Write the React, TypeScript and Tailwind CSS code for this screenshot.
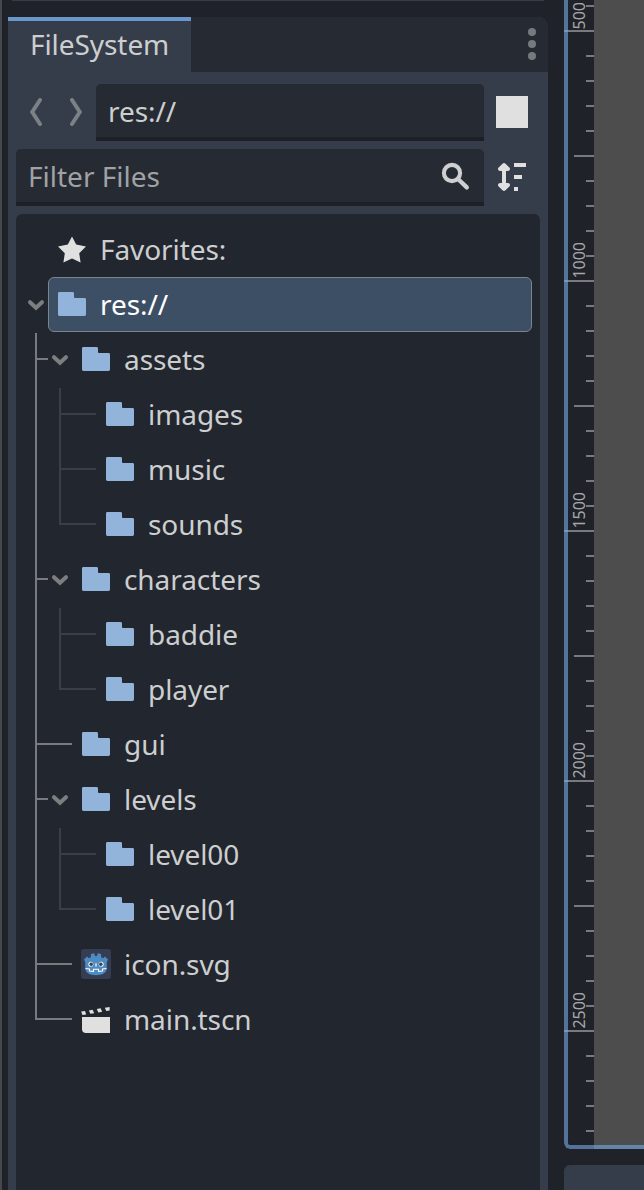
import React from "react";

type Kind = "star" | "folder" | "godot" | "scene";

interface Item {
  label: string;
  kind: Kind;
  depth: number;
  open?: boolean;
  selected?: boolean;
  first?: boolean;
  last?: boolean;
}

const items: Item[] = [
  { label: "Favorites:", kind: "star", depth: 0 },
  { label: "res://", kind: "folder", depth: 0, open: true, selected: true },
  { label: "assets", kind: "folder", depth: 1, open: true, first: true },
  { label: "images", kind: "folder", depth: 2, first: true },
  { label: "music", kind: "folder", depth: 2 },
  { label: "sounds", kind: "folder", depth: 2, last: true },
  { label: "characters", kind: "folder", depth: 1, open: true },
  { label: "baddie", kind: "folder", depth: 2, first: true },
  { label: "player", kind: "folder", depth: 2, last: true },
  { label: "gui", kind: "folder", depth: 1 },
  { label: "levels", kind: "folder", depth: 1, open: true },
  { label: "level00", kind: "folder", depth: 2, first: true },
  { label: "level01", kind: "folder", depth: 2, last: true },
  { label: "icon.svg", kind: "godot", depth: 1 },
  { label: "main.tscn", kind: "scene", depth: 1, last: true },
];

function ItemIcon({ kind }: { kind: Kind }) {
  return (
    <svg viewBox="0 0 32 32" className="h-8 w-8 shrink-0">
      {kind === "folder" && (
        <path
          fill="#92b4da"
          d="M3.4 4H16.6Q18 4 18 5.4V9Q18 10 19 10H28.6Q30 10 30 11.4V26.6Q30 28 28.6 28H3.4Q2 28 2 26.6V5.4Q2 4 3.4 4Z"
        />
      )}
      {kind === "star" && (
        <path
          fill="#e0e0e0"
          d="M16 3.4L20.2 11.6L30 13.4L23.2 20.2L24.6 29.4L16 25.4L7.4 29.4L8.8 20.2L2 13.4L11.8 11.6Z"
        />
      )}
      {kind === "godot" && (
        <>
          <rect x="1" y="1" width="30" height="30" rx="3" fill="#363d52" />
          <path
            fill="#4d8bc4"
            d="M11 6L14.3 5.2L15 8H17L17.7 5.2L21 6L21.2 9.2L23 10.2L25 8.6L28 11.4L26.8 14V20.5C26.8 24.8 22 27.2 16 27.2S5.2 24.8 5.2 20.5V14L4 11.4L7 8.6L9 10.2L10.8 9.2Z"
          />
          <path
            fill="none"
            stroke="#fff"
            strokeWidth="1.1"
            d="M5.5 20.5L9.5 21V23L13.5 23.3V21.3H18.5V23.3L22.5 23V21L26.5 20.5"
          />
          <circle cx="10.8" cy="16.2" r="2.5" fill="#e8ecf0" />
          <circle cx="21.2" cy="16.2" r="2.5" fill="#e8ecf0" />
          <circle cx="11.2" cy="16.2" r="1.7" fill="#414042" />
          <circle cx="20.8" cy="16.2" r="1.7" fill="#414042" />
          <path stroke="#fff" strokeWidth="1.2" d="M16 15.3V18.5" />
        </>
      )}
      {kind === "scene" && (
        <g fill="#e0e0e0">
          <path d="M2 14H30V30H6Q2 30 2 26Z" />
          <path d="M1.2 8.5L5 7.9L6.2 11.4L2.4 12Z" />
          <path d="M8.8 7.4L12.6 6.7L14.2 10.2L10.4 10.8Z" />
          <path d="M16.8 6L20.6 5.3L22.2 8.8L18.4 9.4Z" />
          <path d="M24.8 4.7L29.6 3.9V7.4L26.3 8Z" />
        </g>
      )}
    </svg>
  );
}

function Expander({ open }: { open?: boolean }) {
  return (
    <svg viewBox="0 0 24 55" className="h-[55px] w-6 shrink-0">
      {open && (
        <path
          d="M6 25.2L12 30.8L18 25.2"
          fill="none"
          stroke="#7d7e80"
          strokeWidth="4"
          strokeLinecap="round"
          strokeLinejoin="miter"
        />
      )}
    </svg>
  );
}

function Guide({ item, level }: { item: Item; level: number }) {
  const own = item.depth === level;
  const color = level === 1 ? "bg-[#797a7d]" : "bg-[#3b3e46]";
  const height = own && item.last ? "h-7" : own && item.first ? "mt-px h-[54px]" : "h-full";
  return (
    <div className="flex h-[55px] w-6 shrink-0 pl-[11px]">
      <div className={`w-0.5 shrink-0 ${color} ${height}`} />
      {own && <div className={`mt-[26px] h-0.5 shrink-0 ${color} ${item.open ? "w-[11px]" : "w-[35px]"}`} />}
    </div>
  );
}

function Row({ item }: { item: Item }) {
  return (
    <div className="flex h-[55px] px-2">
      {item.depth >= 1 && <Guide item={item} level={1} />}
      {item.depth >= 2 && <Guide item={item} level={2} />}
      <Expander open={item.open} />
      <div
        className={`flex flex-1 items-start gap-3 rounded-md border pl-[7px] pt-2.5 ${
          item.selected ? "border-[#7c848e] bg-[#3d4f65] text-white" : "border-transparent text-[#cdcecf]"
        }`}
      >
        <ItemIcon kind={item.kind} />
        <span className="pt-0.5 text-[28px] leading-7 tracking-[-0.07px]">{item.label}</span>
      </div>
    </div>
  );
}

function FileSystemDock() {
  return (
    <section className="mt-[17px] flex w-[540px] shrink-0 flex-col overflow-hidden rounded-tr-[10px] bg-[#363d4a]">
      <div className="flex h-[55px] shrink-0 justify-between bg-[#262a32]">
        <div className="w-[183px] border-t-4 border-[#6996cb] bg-[#363d4a] pl-[22px]">
          <span className="block pt-[3px] text-[28px] leading-10 tracking-[-0.07px] text-[#cdcecf]">FileSystem</span>
        </div>
        <div className="flex flex-col items-center gap-1 pr-3 pt-[11px]">
          <i className="h-2 w-2 rounded-full bg-[#76797d]" />
          <i className="h-2 w-2 rounded-full bg-[#76797d]" />
          <i className="h-2 w-2 rounded-full bg-[#76797d]" />
        </div>
      </div>

      <div className="mt-3 flex h-[57px] shrink-0">
        <svg
          viewBox="0 0 88 57"
          className="h-[57px] w-[88px] shrink-0"
          fill="none"
          stroke="#7c8087"
          strokeWidth="4"
          strokeLinecap="round"
        >
          <path d="M32 16L24.2 28L32 40" />
          <path d="M64 16L71.800 28L64 40" />
        </svg>
        <div className="w-[388px] rounded-t-[5px] border-b-4 border-[#1d2027] bg-[#262a32] pl-3 text-[28px] leading-[54px] tracking-[-0.07px] text-[#cdcecf]">
          res://
        </div>
        <div className="ml-3 mt-3 h-8 w-8 bg-[#e0e0e0]" />
      </div>

      <div className="mt-2 flex h-[57px] shrink-0 pl-2">
        <div className="flex w-[468px] justify-between rounded-t-[5px] border-b-4 border-[#1d2027] bg-[#262a32] pl-3 text-[28px] leading-[54px] text-[#a0a2a5]">
          <span>Filter Files</span>
          <svg viewBox="0 0 32 32" className="mr-3 mt-[11px] h-8 w-8" fill="none" stroke="#cfcfd1">
            <circle cx="12" cy="13" r="8.1" strokeWidth="4.1" />
            <path d="M18 19L26.800 27.400" strokeWidth="4.3" strokeLinecap="round" />
          </svg>
        </div>
        <svg viewBox="0 0 32 32" className="ml-3 mt-3 h-8 w-8" fill="#e0e0e0">
          <path d="M8 2Q8.800 2 9.500 2.700L13.600 6.800Q14.400 8 13.600 9.200Q12.600 10.200 11.400 10H10V22H11.400Q12.600 21.800 13.600 22.800Q14.400 24 13.600 25.200L9.500 29.300Q8 30.600 6.500 29.300L2.400 25.200Q1.600 24 2.400 22.800Q3.400 21.800 4.600 22H6V10H4.600Q3.400 10.200 2.400 9.200Q1.600 8 2.400 6.800L6.500 2.700Q7.200 2 8 2Z" />
          <path d="M18 2H30V6H18ZM18 14H26V18H18ZM18 26H22V30H18Z" />
        </svg>
      </div>

      <div className="mx-2 mt-2 flex-1 rounded-t-md bg-[#22262e] pt-2">
        {items.map((item) => (
          <Row key={item.label + item.depth} item={item} />
        ))}
      </div>
    </section>
  );
}

const ticks = Array.from({ length: 46 }, (_, n) => n);

function Viewport() {
  return (
    <div className="relative h-[1149px] shrink-0 overflow-hidden rounded-bl-md bg-[#1f2229]">
      <div className="flex h-full pl-1">
        <div className="flex w-[26px] shrink-0 flex-col items-end pt-[5px]">
          {ticks.map((n) => {
            const major = n % 10 === 1;
            const mid = n % 10 === 6;
            return (
              <div key={n} className="relative flex h-[25px] w-[30px] shrink-0 justify-end">
                <div className={`h-0.5 bg-[#797a7f] ${major ? "w-[30px]" : mid ? "w-5" : "w-2"}`} />
                {major && (
                  <span className="absolute bottom-[26px] left-1.5 rotate-180 text-base leading-[18px] text-[#a5a7aa] [writing-mode:vertical-rl]">
                    {500 + (n - 1) * 50}
                  </span>
                )}
              </div>
            );
          })}
        </div>
        <div className="flex-1 bg-[#4d4d4d]" />
      </div>
      <div className="absolute inset-0 rounded-bl-md border-b-4 border-l-4 border-[#77abe7]/60" />
    </div>
  );
}

export default function App() {
  return (
    <div className="flex h-[1190px] w-[644px] overflow-hidden bg-[#1f2229] font-['Noto_Sans',sans-serif]">
      <div className="w-0.5 shrink-0 bg-[#46484d]" />
      <div className="relative flex w-[546px] shrink-0 pl-1.5">
        <div className="absolute left-2.5 top-0 h-px w-[532px] bg-[#363d4a]" />
        <FileSystemDock />
      </div>
      <div className="ml-4 flex w-20 shrink-0 flex-col">
        <Viewport />
        <div className="mt-4 flex-1 rounded-tl-md bg-[#363d4a]" />
      </div>
    </div>
  );
}
